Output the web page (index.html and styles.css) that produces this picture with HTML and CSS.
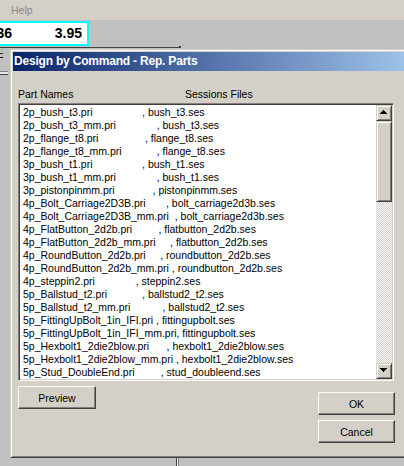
FILE: index.html
```html
<!DOCTYPE html>
<html>
<head>
<meta charset="utf-8">
<link rel="stylesheet" href="styles.css">
</head>
<body>
<div class="screen">
  <div class="menubar"><span class="menu">Help</span></div>
  <div class="toolbar">
    <div class="field"><span class="v1">1.36</span><span class="v2">3.95</span></div>
  </div>
  <div class="rule"></div>
  <div class="work">
    <div class="strip">
      <span class="frag">F</span>
      <div class="sep"></div>
    </div>
    <div class="dialog">
      <div class="titlebar">Design by Command - Rep. Parts</div>
      <div class="body">
        <div class="labels"><span class="lab1">Part Names</span><span class="lab2">Sessions Files</span></div>
        <div class="listbox">
          <div class="items">
<div class="row">2p_bush_t3.pri                 , bush_t3.ses</div>
<div class="row">2p_bush_t3_mm.pri              , bush_t3.ses</div>
<div class="row">2p_flange_t8.pri                , flange_t8.ses</div>
<div class="row">2p_flange_t8_mm.pri            , flange_t8.ses</div>
<div class="row">3p_bush_t1.pri                 , bush_t1.ses</div>
<div class="row">3p_bush_t1_mm.pri              , bush_t1.ses</div>
<div class="row">3p_pistonpinmm.pri             , pistonpinmm.ses</div>
<div class="row">4p_Bolt_Carriage2D3B.pri       , bolt_carriage2d3b.ses</div>
<div class="row">4p_Bolt_Carriage2D3B_mm.pri  , bolt_carriage2d3b.ses</div>
<div class="row">4p_FlatButton_2d2b.pri         , flatbutton_2d2b.ses</div>
<div class="row">4p_FlatButton_2d2b_mm.pri     , flatbutton_2d2b.ses</div>
<div class="row">4p_RoundButton_2d2b.pri     , roundbutton_2d2b.ses</div>
<div class="row">4p_RoundButton_2d2b_mm.pri , roundbutton_2d2b.ses</div>
<div class="row">4p_steppin2.pri              , steppin2.ses</div>
<div class="row">5p_Ballstud_t2.pri            , ballstud2_t2.ses</div>
<div class="row">5p_Ballstud_t2_mm.pri           , ballstud2_t2.ses</div>
<div class="row">5p_FittingUpBolt_1in_IFI.pri , fittingupbolt.ses</div>
<div class="row">5p_FittingUpBolt_1in_IFI_mm.pri, fittingupbolt.ses</div>
<div class="row">5p_Hexbolt1_2die2blow.pri      , hexbolt1_2die2blow.ses</div>
<div class="row">5p_Hexbolt1_2die2blow_mm.pri , hexbolt1_2die2blow.ses</div>
<div class="row">5p_Stud_DoubleEnd.pri         , stud_doubleend.ses</div>
          </div>
          <div class="vscroll">
            <div class="sb">
              <svg width="14" height="14" viewBox="0 0 14 14" shape-rendering="crispEdges"><rect x="6" y="4" width="1" height="1"/><rect x="5" y="5" width="3" height="1"/><rect x="4" y="6" width="5" height="1"/><rect x="3" y="7" width="7" height="1"/></svg>
            </div>
            <div class="sb thumb"></div>
            <div class="track"></div>
            <div class="sb">
              <svg width="14" height="14" viewBox="0 0 14 14" shape-rendering="crispEdges"><rect x="3" y="4" width="7" height="1"/><rect x="4" y="5" width="5" height="1"/><rect x="5" y="6" width="3" height="1"/><rect x="6" y="7" width="1" height="1"/></svg>
            </div>
          </div>
        </div>
        <div class="actions">
          <button class="btn">Preview</button>
          <div class="okc">
            <button class="btn sm">OK</button>
            <button class="btn sm">Cancel</button>
          </div>
        </div>
      </div>
    </div>
  </div>
  <div class="bottom"><div class="split"></div></div>
</div>
</body>
</html>
```
FILE: styles.css
```css
* { box-sizing: border-box; }
html, body { margin: 0; padding: 0; }
body {
  width: 404px;
  height: 466px;
  overflow: hidden;
  background: #c0c0c0;
  font-family: "Liberation Sans", Arial, sans-serif;
}
.screen {
  width: 404px;
  height: 466px;
  overflow: hidden;
  display: flex;
  flex-direction: column;
}
.menubar {
  flex: none;
  height: 20px;
  background: #d4d0c8;
  padding-left: 11px;
  font-size: 10.5px;
  line-height: 20px;
  color: #8a8a8a;
}
.toolbar {
  flex: none;
  height: 26px;
  padding-top: 1px;
}
.field {
  margin-left: -40px;
  width: 129px;
  height: 25px;
  border: 2px solid #00ffff;
  background: #fff;
  display: flex;
  font-weight: bold;
  font-size: 14px;
  line-height: 21px;
  color: #000;
}
.v1 { width: 50px; text-align: right; }
.v2 { flex: 1; text-align: right; padding-right: 5px; }
.rule {
  flex: none;
  width: 181px;
  height: 2px;
  border-bottom: 1px solid #404040;
  border-right: 2px solid #404040;
  margin-bottom: 1px;
}
.work {
  flex: none;
  height: 409px;
  display: flex;
}
.strip {
  flex: none;
  width: 10px;
  overflow: hidden;
  font-size: 10.5px;
}
.frag {
  display: block;
  margin-top: 3px;
  margin-left: -3px;
  line-height: 10px;
  color: #000;
}
.sep {
  margin-top: 9px;
  width: 8px;
  height: 4px;
  border-top: 1px solid #808080;
  border-bottom: 1px solid #404040;
  background: #e8e8e8;
}
.dialog {
  flex: none;
  width: 420px;
  height: 409px;
  background: #d4d0c8;
  border: 1px solid;
  border-color: #d4d0c8 #404040 #404040 #d4d0c8;
  box-shadow: inset 1px 1px #fff, inset -1px -1px #808080;
  padding: 2px;
  display: flex;
  flex-direction: column;
}
.titlebar {
  flex: none;
  height: 19px;
  background: linear-gradient(to right, #0a246a, #a6caf0);
  color: #fff;
  font-weight: bold;
  font-size: 12px;
  line-height: 19px;
  padding-left: 1px;
  letter-spacing: -0.2px;
  white-space: nowrap;
}
.body {
  flex: 1;
  padding: 17px 0 0 5px;
  font-size: 10.5px;
  color: #000;
}
.labels {
  display: flex;
  height: 13px;
  line-height: 13px;
  margin-bottom: 2px;
}
.lab1 { width: 167px; }
.listbox {
  width: 376px;
  height: 278px;
  background: #fff;
  border: 1px solid;
  border-color: #808080 #fff #fff #808080;
  box-shadow: inset 1px 1px #404040, inset -1px -1px #d4d0c8;
  padding: 1px;
  display: flex;
}
.items {
  flex: 1;
  padding: 1px 0 0 3px;
  overflow: hidden;
}
.row {
  height: 13px;
  line-height: 13px;
  white-space: pre;
}
.vscroll {
  flex: none;
  width: 16px;
  display: flex;
  flex-direction: column;
  background: repeating-conic-gradient(#fff 0 25%, #d4d0c8 0 50%) 0 0 / 2px 2px;
}
.sb {
  flex: none;
  height: 16px;
  background: #d4d0c8;
  border: 1px solid;
  border-color: #d4d0c8 #404040 #404040 #d4d0c8;
  box-shadow: inset 1px 1px #fff, inset -1px -1px #808080;
}
.sb svg { display: block; }
.thumb { height: 81px; }
.track { flex: 1; }
.actions {
  display: flex;
  justify-content: space-between;
  align-items: flex-start;
  width: 377px;
  margin-top: 5px;
}
.btn {
  width: 78px;
  height: 23px;
  padding: 0;
  margin: 0;
  background: #d4d0c8;
  border: 1px solid;
  border-color: #fff #404040 #404040 #fff;
  box-shadow: inset -1px -1px #808080;
  font-family: "Liberation Sans", Arial, sans-serif;
  font-size: 10.5px;
  color: #000;
}
.okc {
  display: flex;
  flex-direction: column;
  gap: 5px;
  margin-top: 6px;
}
.btn.sm { width: 77px; }
.bottom {
  flex: none;
  height: 8px;
}
.split {
  margin-left: 176px;
  width: 3px;
  height: 8px;
  border-left: 1px solid #404040;
  border-right: 1px solid #808080;
  background: #fff;
}
```
